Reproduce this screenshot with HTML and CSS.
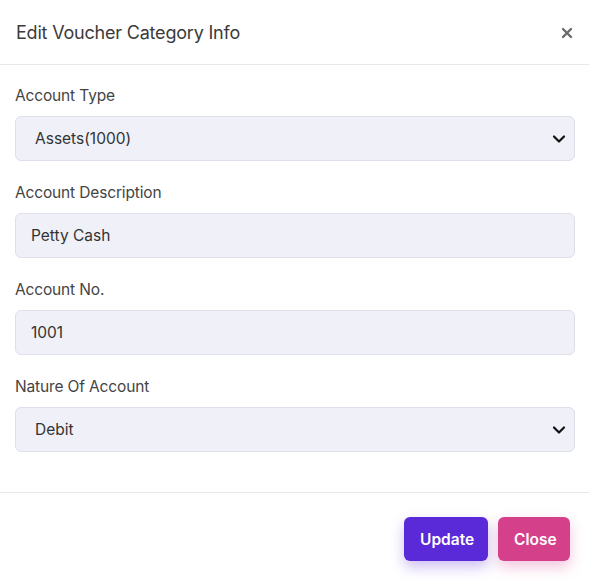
FILE: index.html
```html
<!DOCTYPE html>
<html>
<head>
<meta charset="utf-8">
<link rel="stylesheet" href="styles.css">
</head>
<body>
<div class="modal">
  <div class="modal-header">
    <h5 class="modal-title">Edit Voucher Category Info</h5>
    <button class="btn-x" type="button" aria-label="Close">
      <svg width="12" height="12" viewBox="0 0 12 12"><path d="M2 2 L10 10 M10 2 L2 10" stroke="#6b6b6b" stroke-width="2.4" stroke-linecap="round"/></svg>
    </button>
  </div>
  <div class="modal-body">
    <div class="group">
      <label class="label">Account Type</label>
      <select class="control select"><option>Assets(1000)</option></select>
    </div>
    <div class="group">
      <label class="label">Account Description</label>
      <input class="control" type="text" value="Petty Cash">
    </div>
    <div class="group">
      <label class="label">Account No.</label>
      <input class="control" type="text" value="1001">
    </div>
    <div class="group">
      <label class="label">Nature Of Account</label>
      <select class="control select"><option>Debit</option></select>
    </div>
  </div>
  <div class="modal-footer">
    <button class="btn btn-update" type="button">Update</button>
    <button class="btn btn-close" type="button">Close</button>
  </div>
</div>
</body>
</html>
```
FILE: styles.css
```css
* { box-sizing: border-box; }
html, body { margin: 0; padding: 0; background: #fff; }
body { font-family: "Inter", "Open Sans", sans-serif; color: #3d3d3d; }
.modal { width: 589px; height: 582px; background: #fff; display: flex; flex-direction: column; }
.modal-header {
  height: 65px; border-bottom: 1px solid #e6e8ee;
  display: flex; align-items: center; justify-content: space-between;
  padding: 0 15px 0 16px;
}
.modal-title { margin: 0; font-size: 18px; font-weight: 400; color: #3b3b3b; letter-spacing: -0.2px; }
.btn-x { border: 0; background: none; padding: 0; width: 14px; height: 14px; display: flex; align-items: center; justify-content: center; margin-top: 2px; }
.modal-body { padding: 19px 14px 20px 15px; border-bottom: 1px solid #e6e8ee; }
.group { margin-bottom: 20px; }
.group + .group { margin-top: 0; }
.group:nth-child(3) { margin-top: 1px; }
.label { display: block; font-size: 15.5px; line-height: 24px; margin-bottom: 8px; color: #444; letter-spacing: -0.15px; }
.control {
  display: block; width: 100%; height: 45px;
  background-color: #eff0f8; border: 1px solid #dde0ea; border-radius: 6px;
  font-family: inherit; font-size: 15.5px; color: #333; padding: 0 15px;
  outline: none;
}
.select {
  -webkit-appearance: none; appearance: none; padding-left: 19px;
  background-image: url("data:image/svg+xml;utf8,<svg xmlns='http://www.w3.org/2000/svg' width='14' height='10' viewBox='0 0 14 10'><path d='M2 2.5 L7 7.5 L12 2.5' fill='none' stroke='%23111' stroke-width='2.2' stroke-linecap='round' stroke-linejoin='round'/></svg>");
  background-repeat: no-repeat; background-position: right 8px center; background-size: 14px 10px;
}
.modal-footer { display: flex; justify-content: flex-end; gap: 10px; padding: 24px 19px 0 0; }
.btn {
  height: 44px; border: 0; border-radius: 6px; color: #fff;
  font-family: inherit; font-size: 15.5px; font-weight: 600; padding: 0 16px;
}
.btn-update { width: 84px; background: #5b2ad8; box-shadow: 0 6px 14px rgba(91, 42, 216, 0.3); }
.btn-close { width: 72px; background: #d5408b; box-shadow: 0 6px 14px rgba(213, 64, 139, 0.3); }
```
